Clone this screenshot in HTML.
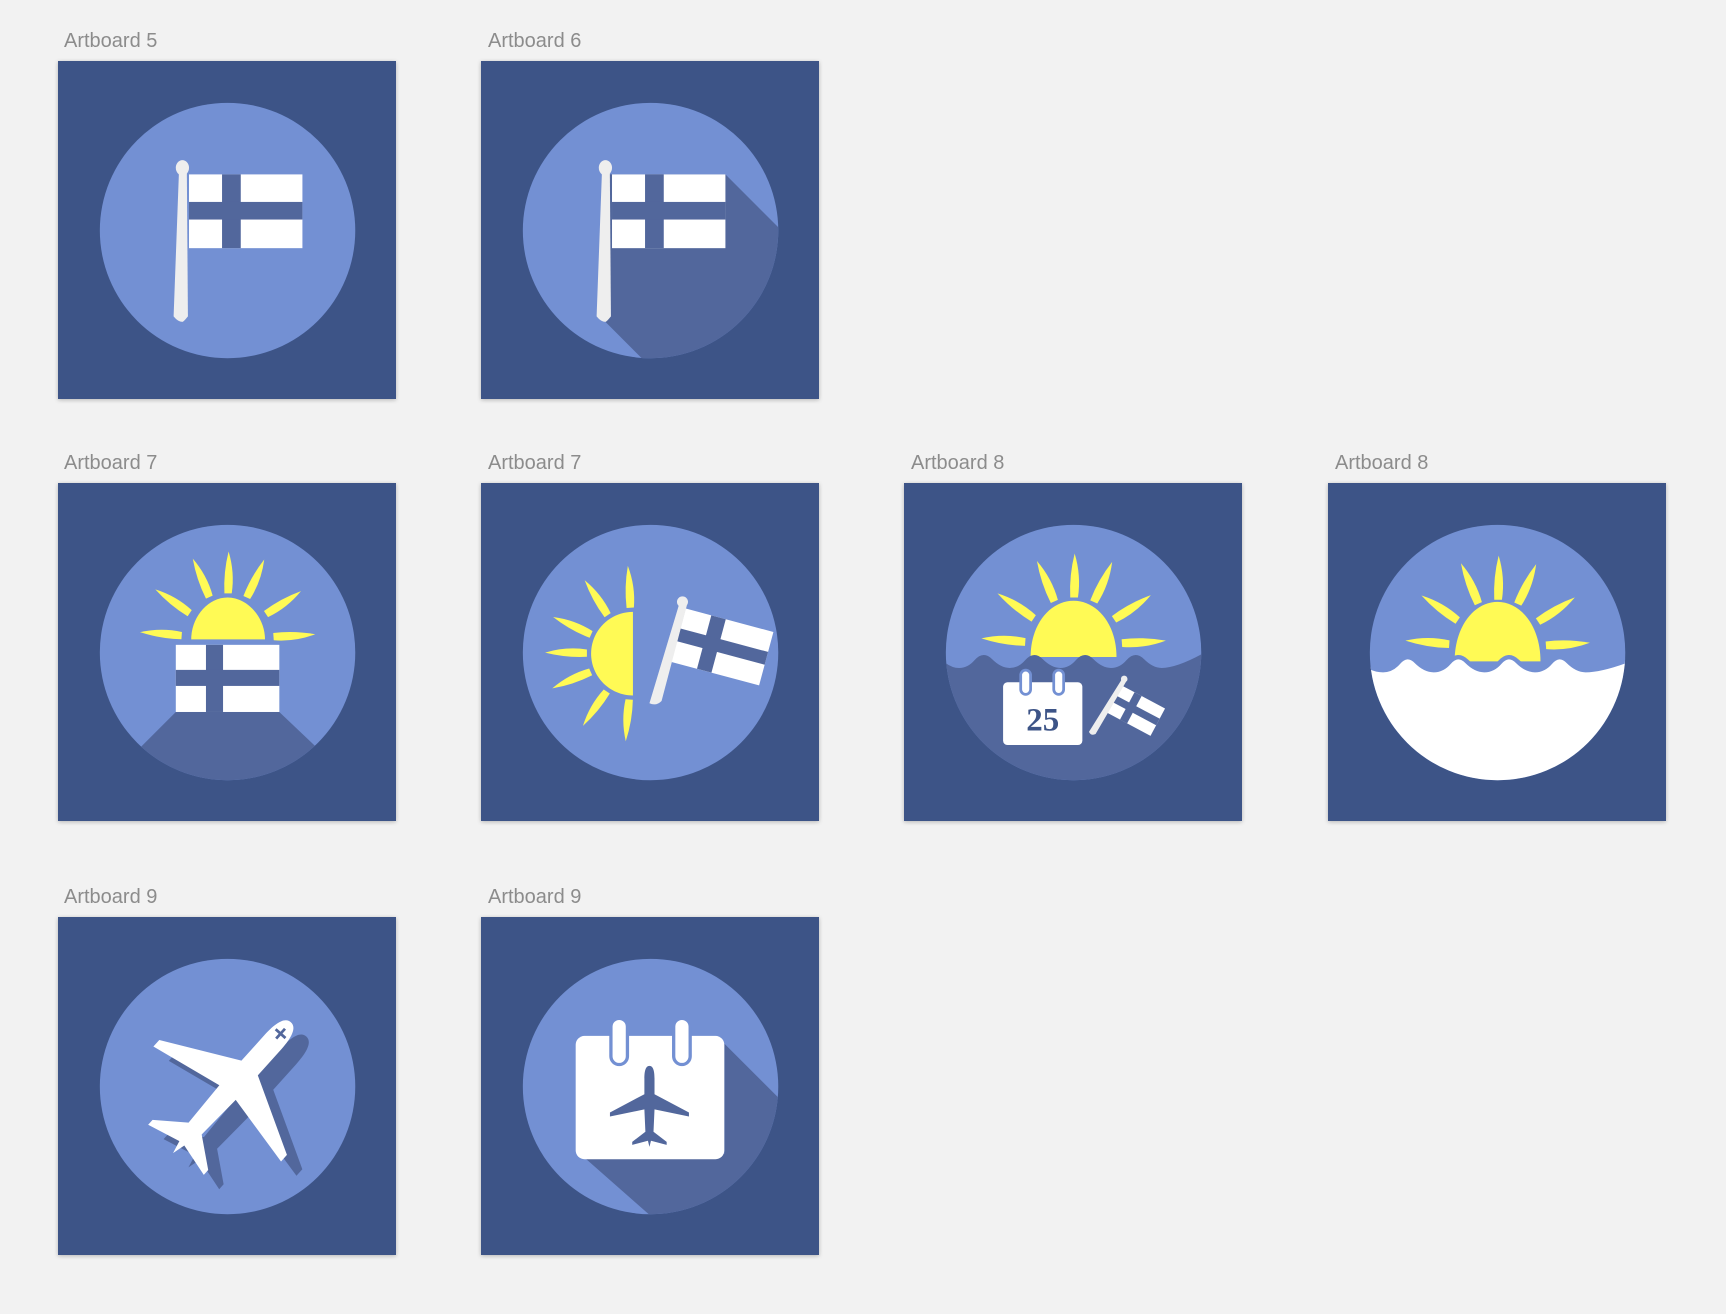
<!DOCTYPE html>
<html><head><meta charset="utf-8"><style>
html,body{margin:0;padding:0;background:#f2f2f2;width:1726px;height:1314px;overflow:hidden;font-family:"Liberation Sans",sans-serif}
.ab{position:absolute;width:338px;height:338px;box-shadow:0 1px 4px rgba(0,0,0,.25)}
.lb{position:absolute;font-size:20px;color:#8c8c8c;line-height:20px}
svg{display:block}
</style></head><body>
<svg width="0" height="0" style="position:absolute">
<defs>
<clipPath id="cc"><circle cx="154" cy="154" r="116"/></clipPath>
<path id="ray" d="M-3,-44 Q-4,-64 1,-84 Q7,-64 4,-44 Z" fill="#fffa55"/>
<g id="sun7">
<use href="#ray" transform="rotate(0)"/><use href="#ray" transform="rotate(-24)"/><use href="#ray" transform="rotate(24)"/>
<use href="#ray" transform="rotate(-56)"/><use href="#ray" transform="rotate(56)"/>
<use href="#ray" transform="rotate(-86)"/><use href="#ray" transform="rotate(86)"/>
</g>
<g id="finflag">
<rect x="0" y="0" width="103" height="67" fill="#fff"/>
<rect x="30" y="0" width="17" height="67" fill="#52679c"/>
<rect x="0" y="25" width="103" height="16" fill="#52679c"/>
</g>
<path id="plane" d="M0,-80 C8,-80 10,-68 10,-55 L10,-24 L78,12 L78,20 L10,6 L8,50 L34,70 L34,76 L3,68 L0,80 L-3,68 L-34,76 L-34,70 L-8,50 L-10,6 L-78,20 L-78,12 L-10,-24 L-10,-55 C-10,-68 -8,-80 0,-80 Z"/>
</defs></svg>

<!-- Row 1 -->
<div class="lb" style="left:64px;top:31px">Artboard 5</div>
<div class="ab" style="left:58px;top:61px"><svg width="338" height="338" viewBox="0 0 307 307">
<rect width="307" height="307" fill="#3d5487"/><circle cx="154" cy="154" r="116" fill="#7390d3"/>
<use href="#finflag" transform="translate(119,103)"/>
<path d="M110,97 L117,97 L118,232 Q114,237 113,237 Q109,237 105,232 Z" fill="#eee"/>
<ellipse cx="113" cy="97" rx="6" ry="7" fill="#eee"/>
</svg></div>

<div class="lb" style="left:488px;top:31px">Artboard 6</div>
<div class="ab" style="left:481px;top:61px"><svg width="338" height="338" viewBox="0 0 307 307">
<rect width="307" height="307" fill="#3d5487"/><circle cx="154" cy="154" r="116" fill="#7390d3"/>
<g clip-path="url(#cc)"><polygon points="116,103 222,103 422,303 313,437 113,237 118,232" fill="#52679c"/></g>
<use href="#finflag" transform="translate(119,103)"/>
<path d="M110,97 L117,97 L118,232 Q114,237 113,237 Q109,237 105,232 Z" fill="#eee"/>
<ellipse cx="113" cy="97" rx="6" ry="7" fill="#eee"/>
</svg></div>

<!-- Row 2 -->
<div class="lb" style="left:64px;top:453px">Artboard 7</div>
<div class="ab" style="left:58px;top:483px"><svg width="338" height="338" viewBox="0 0 307 307">
<rect width="307" height="307" fill="#3d5487"/><circle cx="154" cy="154" r="116" fill="#7390d3"/>
<g clip-path="url(#cc)"><polygon points="107,208 201,208 240,245 240,320 70,320 70,245" fill="#52679c"/></g>
<path d="M121,142 C121,122 136,104 154,104 C172,104 188,122 188,142 Z" fill="#fffa55"/>
<use href="#sun7" transform="translate(154,142) scale(0.95)"/>
<use href="#finflag" transform="translate(107,147) scale(0.913,0.91)"/>
</svg></div>

<div class="lb" style="left:488px;top:453px">Artboard 7</div>
<div class="ab" style="left:481px;top:483px"><svg width="338" height="338" viewBox="0 0 307 307">
<rect width="307" height="307" fill="#3d5487"/><circle cx="154" cy="154" r="116" fill="#7390d3"/>
<path d="M138,117 C117,117 100,134 100,155 C100,176 117,193 138,193 Z" fill="#fffa55"/>
<g transform="translate(138,155) rotate(-90) scale(0.95)">
<use href="#ray" transform="rotate(0)"/><use href="#ray" transform="rotate(24)"/><use href="#ray" transform="rotate(-24)"/>
<use href="#ray" transform="rotate(56)"/><use href="#ray" transform="rotate(-56)"/>
<use href="#ray" transform="rotate(86)"/><use href="#ray" transform="rotate(-86)"/></g>
<g transform="translate(186,114) rotate(15)"><use href="#finflag" transform="scale(0.8,0.75)"/></g>
<path d="M180,110 L187,111 L164,198 Q159,203 153,200 Z" fill="#eee"/>
<circle cx="183" cy="108" r="5" fill="#eee"/>
</svg></div>

<div class="lb" style="left:911px;top:453px">Artboard 8</div>
<div class="ab" style="left:904px;top:483px"><svg width="338" height="338" viewBox="0 0 307 307">
<rect width="307" height="307" fill="#3d5487"/><circle cx="154" cy="154" r="116" fill="#7390d3"/>
<path d="M115,158 C115,128 133,107 154,107 C175,107 193,128 193,158 Z" fill="#fffa55"/>
<use href="#sun7" transform="translate(154,148) scale(1.0)"/>
<g clip-path="url(#cc)"><path d="M30,156 Q40,168 50,168 Q58,168 64,161 Q72,152 80,160 Q88,168 96,168 Q104,168 110,161 Q118,152 126,160 Q134,168 142,168 Q150,168 156,161 Q164,152 172,160 Q180,168 188,168 Q196,168 202,161 Q210,152 218,160 Q226,168 234,168 Q250,168 280,150 L280,300 L30,300 Z" fill="#52679c"/></g>
<rect x="90" y="181" width="72" height="57" rx="4" fill="#fff"/>
<rect x="106" y="170" width="9" height="22" rx="4.5" fill="#fff" stroke="#7390d3" stroke-width="2.5"/>
<rect x="136" y="170" width="9" height="22" rx="4.5" fill="#fff" stroke="#7390d3" stroke-width="2.5"/>
<text x="126" y="225" text-anchor="middle" font-family="Liberation Serif,serif" font-weight="bold" font-size="30" fill="#3d5487">25</text>
<g transform="translate(198,184) rotate(28)"><use href="#finflag" transform="scale(0.43,0.42)"/></g>
<path d="M198,178 L202,180 L174,228 Q170,230 168,226 Z" fill="#eee"/>
<circle cx="200" cy="178" r="3" fill="#eee"/>
</svg></div>

<div class="lb" style="left:1335px;top:453px">Artboard 8</div>
<div class="ab" style="left:1328px;top:483px"><svg width="338" height="338" viewBox="0 0 307 307">
<rect width="307" height="307" fill="#3d5487"/><circle cx="154" cy="154" r="116" fill="#7390d3"/>
<path d="M115,162 C115,130 133,108 154,108 C175,108 193,130 193,162 Z" fill="#fffa55"/>
<use href="#sun7" transform="translate(154,150) scale(1.0)"/>
<g clip-path="url(#cc)"><path d="M30,162 Q40,170 50,170 Q58,170 64,163 Q72,154 80,162 Q88,170 96,170 Q104,170 110,163 Q118,154 126,162 Q134,170 142,170 Q150,170 156,163 Q164,154 172,162 Q180,170 188,170 Q196,170 202,163 Q210,154 218,162 Q226,170 234,170 Q250,170 280,158 L280,300 L30,300 Z" fill="#fff" stroke="#7390d3" stroke-width="4"/></g>
</svg></div>

<!-- Row 3 -->
<div class="lb" style="left:64px;top:887px">Artboard 9</div>
<div class="ab" style="left:58px;top:917px"><svg width="338" height="338" viewBox="0 0 307 307">
<rect width="307" height="307" fill="#3d5487"/><circle cx="154" cy="154" r="116" fill="#7390d3"/>
<g clip-path="url(#cc)"><use href="#plane" fill="#52679c" transform="translate(172,168) rotate(42)"/></g>
<use href="#plane" fill="#fff" transform="translate(158,155) rotate(42)"/>
<g transform="translate(158,155) rotate(42)" stroke="#52679c" stroke-width="2.5"><line x1="-6" y1="-66" x2="6" y2="-66"/><line x1="0" y1="-72" x2="0" y2="-60"/></g>
</svg></div>

<div class="lb" style="left:488px;top:887px">Artboard 9</div>
<div class="ab" style="left:481px;top:917px"><svg width="338" height="338" viewBox="0 0 307 307">
<rect width="307" height="307" fill="#3d5487"/><circle cx="154" cy="154" r="116" fill="#7390d3"/>
<g clip-path="url(#cc)"><polygon points="221,115 400,294 300,400 90,215 221,215" fill="#52679c"/></g>
<rect x="86" y="108" width="135" height="112" rx="8" fill="#fff"/>
<rect x="118" y="92" width="15" height="42" rx="7.5" fill="#fff" stroke="#7390d3" stroke-width="3"/>
<rect x="175" y="92" width="15" height="42" rx="7.5" fill="#fff" stroke="#7390d3" stroke-width="3"/>
<use href="#plane" fill="#52679c" transform="translate(153,172) scale(0.46)"/>
</svg></div>
</body></html>
